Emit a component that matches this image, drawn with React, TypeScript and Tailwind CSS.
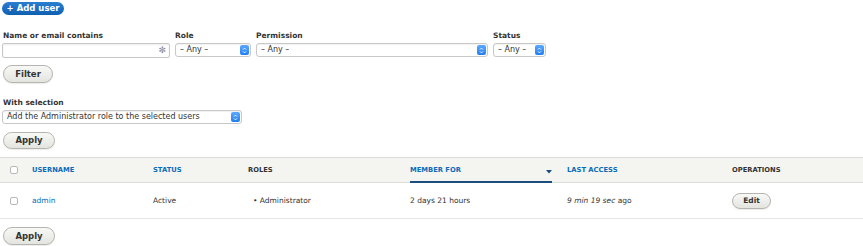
import type { ReactNode } from 'react'

const font = { fontFamily: '"DejaVu Sans", "Liberation Sans", sans-serif' }

function SelectBox({ label, width }: { label: string; width: string }) {
  return (
    <div
      className={`flex h-[14px] items-center justify-between rounded-[3px] border border-[#c8c8c8] bg-white pl-[4px] pr-[1px] text-[8px] text-[#333] shadow-[inset_0_1px_1px_rgba(0,0,0,0.06)] ${width}`}
    >
      <span className="truncate">{label}</span>
      <span className="flex h-[10px] w-[9px] flex-col items-center justify-center rounded-[2px] bg-gradient-to-b from-[#5aa9ff] to-[#1f7ef0]">
        <svg width="5" height="7" viewBox="0 0 5 7">
          <path d="M1 2.6 L2.5 1.1 L4 2.6" stroke="white" strokeWidth="0.9" fill="none" />
          <path d="M1 4.4 L2.5 5.9 L4 4.4" stroke="white" strokeWidth="0.9" fill="none" />
        </svg>
      </span>
    </div>
  )
}

function PillButton({ children, className = '' }: { children: ReactNode; className?: string }) {
  return (
    <button
      type="button"
      className={`flex items-center justify-center rounded-full border border-[#b5b5b0] bg-gradient-to-b from-[#f8f8f6] to-[#e4e4df] font-bold text-[#333] shadow-[0_1px_1px_rgba(0,0,0,0.08)] ${className}`}
    >
      {children}
    </button>
  )
}

function Checkbox() {
  return <span className="block h-[8px] w-[8px] rounded-[2px] border border-[#b8b8b8] bg-white" />
}

function Label({ children }: { children: ReactNode }) {
  return <div className="mb-[2px] text-[7.5px] font-bold leading-[10px] text-[#333]">{children}</div>
}

export default function App() {
  return (
    <div style={font} className="h-[246px] w-[863px] overflow-hidden bg-white">
      <div className="px-[2px] pt-[2px]">
        <button
          type="button"
          className="flex h-[13px] w-[62px] items-center justify-center rounded-full bg-gradient-to-b from-[#2a7fd0] to-[#0f5fb0] text-[8.5px] font-bold text-white"
        >
          + Add user
        </button>
      </div>

      {/* filters */}
      <div className="mt-[16px] flex items-start gap-[5px] pl-[2px]">
        <div>
          <Label>
            <span className="pl-[1px]">Name or email contains</span>
          </Label>
          <div className="flex h-[15px] w-[168px] items-center justify-end rounded-[2px] border border-[#c8c8c8] bg-white pr-[3px] shadow-[inset_0_1px_2px_rgba(0,0,0,0.08)]">
            <span className="text-[9px] leading-none text-[#888]">✻</span>
          </div>
        </div>
        <div>
          <Label>Role</Label>
          <SelectBox label="– Any –" width="w-[76px]" />
        </div>
        <div>
          <Label>Permission</Label>
          <SelectBox label="– Any –" width="w-[232px]" />
        </div>
        <div>
          <Label>Status</Label>
          <SelectBox label="– Any –" width="w-[53px]" />
        </div>
      </div>

      <div className="mt-[7px] pl-[3px]">
        <PillButton className="h-[18px] w-[50px] text-[8.5px]">Filter</PillButton>
      </div>

      {/* bulk */}
      <div className="mt-[15px] pl-[2px]">
        <Label>
          <span className="pl-[1px]">With selection</span>
        </Label>
        <SelectBox label="Add the Administrator role to the selected users" width="w-[240px]" />
      </div>

      <div className="mt-[8px] pl-[3px]">
        <PillButton className="h-[17px] w-[52px] text-[8.5px]">Apply</PillButton>
      </div>

      {/* table */}
      <table className="mt-[8px] w-[863px] border-collapse text-left text-[7.5px] text-[#333]">
        <thead>
          <tr className="h-[25px] border-y border-[#dcdcd8] bg-[#f4f4f1] text-[6.75px] font-bold uppercase">
            <th className="w-[32px] pl-[10px]">
              <Checkbox />
            </th>
            <th className="w-[121px] text-[#0a6bb8]">Username</th>
            <th className="w-[95px] text-[#0a6bb8]">Status</th>
            <th className="w-[162px]">Roles</th>
            <th className="relative w-[157px] text-[#0a6bb8]">
              Member for
              <span className="absolute bottom-[-1px] left-0 h-[2px] w-[142px] bg-[#1b4e7c]" />
              <svg className="absolute left-[136px] top-[12px]" width="6" height="4" viewBox="0 0 6 4">
                <path d="M0 0 H6 L3 3.5 Z" fill="#1b4e7c" />
              </svg>
            </th>
            <th className="w-[165px] text-[#0a6bb8]">Last access</th>
            <th>Operations</th>
          </tr>
        </thead>
        <tbody>
          <tr className="h-[36px] border-b border-[#e4e4e0]">
            <td className="pl-[10px]">
              <Checkbox />
            </td>
            <td className="text-[#0a6bb8]">admin</td>
            <td>Active</td>
            <td className="pl-[5px]">• Administrator</td>
            <td>2 days 21 hours</td>
            <td>
              <em>9 min 19 sec</em> ago
            </td>
            <td>
              <PillButton className="h-[16px] w-[39px] text-[7.5px]">Edit</PillButton>
            </td>
          </tr>
        </tbody>
      </table>

      <div className="mt-[8px] pl-[3px]">
        <PillButton className="h-[18px] w-[52px] text-[8.5px]">Apply</PillButton>
      </div>
    </div>
  )
}
